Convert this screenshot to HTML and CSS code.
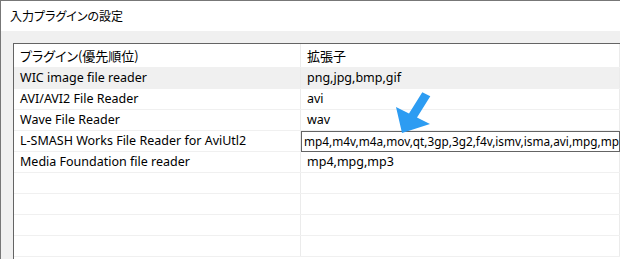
FILE: index.html
```html
<!DOCTYPE html>
<html lang="ja">
<head>
    <meta charset="UTF-8">
    <title>入力プラグインの設定</title>
    <link rel="stylesheet" href="styles.css">
</head>
<body>
   <div class="window">
       <div class="title">入力プラグインの設定</div>
       <div class="content">
           <div class="grid">
               <div class="row head">
                   <div class="cell name">プラグイン(優先順位)</div>
                   <div class="cell ext">拡張子</div>
               </div>
               <div class="row hover">
                   <div class="cell name">WIC image file reader</div>
                   <div class="cell ext">png,jpg,bmp,gif</div>
               </div>
               <div class="row">
                   <div class="cell name">AVI/AVI2 File Reader</div>
                   <div class="cell ext">avi</div>
               </div>
               <div class="row">
                   <div class="cell name">Wave File Reader</div>
                   <div class="cell ext">wav</div>
               </div>
               <div class="row">
                   <div class="cell name">L-SMASH Works File Reader for AviUtl2</div>
                   <div class="cell ext editing">
                       <div class="edit">mp4,m4v,m4a,mov,qt,3gp,3g2,f4v,ismv,isma,avi,mpg,mp</div>
                   </div>
               </div>
               <div class="row">
                   <div class="cell name">Media Foundation file reader</div>
                   <div class="cell ext">mp4,mpg,mp3</div>
               </div>
               <div class="row"><div class="cell name"></div><div class="cell ext"></div></div>
               <div class="row"><div class="cell name"></div><div class="cell ext"></div></div>
               <div class="row"><div class="cell name"></div><div class="cell ext"></div></div>
               <div class="row"><div class="cell name"></div><div class="cell ext"></div></div>
           </div>
       </div>
       <!-- 注釈の矢印 -->
       <svg class="arrow" width="60" height="60" viewBox="380 85 60 60">
           <polygon points="402,133 396,107 409,113.5 422.3,92.3 430.3,96.3 417,117.5 430,124" fill="#2d9cf2"/>
       </svg>
   </div>
</body>
</html>
```

FILE: styles.css
```css
*{
    margin: 0;
    padding: 0;
    box-sizing: border-box;
}
html,body{
    width: 620px;
    height: 259px;
    overflow: hidden;
    background: #f0f0f0;
}
.window{
    position: relative;
    height: 259px;
    overflow: hidden;
    border-left: 1px solid #777;
    border-top: 1px solid #777;
    font-family: "Noto Sans", "Noto Sans CJK JP", sans-serif;
    color: #000;
}
.title{
    height: 30px;
    background: #fff;
    padding-left: 9px;
    font: 12px/29px "Noto Sans CJK JP", sans-serif;
    font-feature-settings: "palt";
}
.content{
    padding: 12px 0 0 12px;
    background: #f0f0f0;
    height: 228px;
    overflow: hidden;
}
.grid{
    width: 607px;
    height: 216px;
    overflow: hidden;
    background: #fff;
    border-left: 1px solid #646464;
    border-top: 1px solid #646464;
}
.row{
    display: flex;
    height: 21px;
    border-bottom: 1px solid #f0f0f0;
    font-size: 12.5px;
    line-height: 20px;
}
.row.head{
    height: 24px;
    line-height: 23px;
    font-size: 13px;
}
.row.head .cell{
    font-family: "Noto Sans CJK JP", sans-serif;
    font-feature-settings: "palt";
}
.row.hover{
    background: #f0f0f0;
}
.cell{
    white-space: nowrap;
    overflow: hidden;
    flex: none;
}
.name{
    width: 287px;
    padding-left: 6px;
    border-right: 1px solid #ebebeb;
}
.ext{
    width: 319px;
    padding-left: 6px;
    border-right: 1px solid #ebebeb;
}
.ext.editing{
    padding-left: 0;
    overflow: visible;
}
.edit{
    height: 21px;
    width: 319px;
    border: 1px solid #646464;
    padding-left: 2px;
    font-size: 11.8px;
    line-height: 19px;
    overflow: hidden;
    background: #fff;
}
.arrow{
    position: absolute;
    left: 379px;
    top: 84px;
}
```
